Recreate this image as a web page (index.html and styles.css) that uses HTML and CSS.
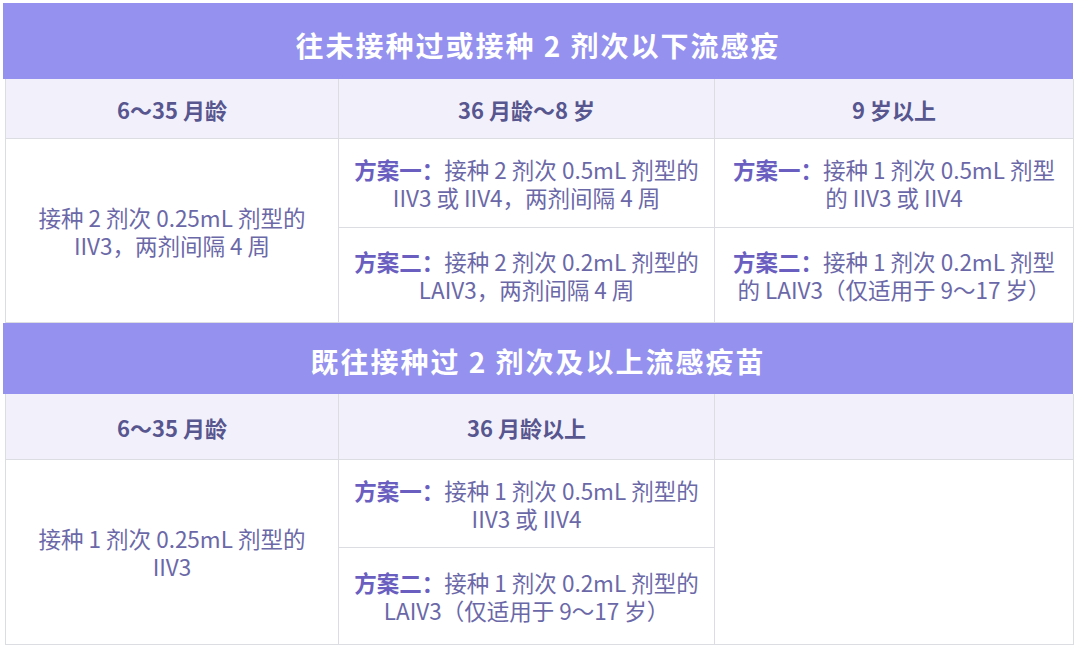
FILE: index.html
```html
<!DOCTYPE html>
<html lang="zh">
<head>
<meta charset="utf-8">
<link rel="stylesheet" href="styles.css">
</head>
<body>
<div class="page">
  <div class="band band1">往未接种过或接种 2 剂次以下流感疫</div>
  <div class="grid g1">
    <div class="th">6～35 月龄</div>
    <div class="th">36 月龄～8 岁</div>
    <div class="th">9 岁以上</div>
    <div class="td span2"><p class="txt">接种 2 剂次 0.25mL 剂型的<br>IIV3，两剂间隔 4 周</p></div>
    <div class="td"><p class="txt"><span class="plan">方案一：</span>接种 2 剂次 0.5mL 剂型的<br>IIV3 或 IIV4，两剂间隔 4 周</p></div>
    <div class="td"><p class="txt"><span class="plan">方案一：</span>接种 1 剂次 0.5mL 剂型<br>的 IIV3 或 IIV4</p></div>
    <div class="td"><p class="txt"><span class="plan">方案二：</span>接种 2 剂次 0.2mL 剂型的<br>LAIV3，两剂间隔 4 周</p></div>
    <div class="td"><p class="txt"><span class="plan">方案二：</span>接种 1 剂次 0.2mL 剂型<br>的 LAIV3（仅适用于 9～17 岁）</p></div>
  </div>
  <div class="band band2">既往接种过 2 剂次及以上流感疫苗</div>
  <div class="grid g2">
    <div class="th">6～35 月龄</div>
    <div class="th">36 月龄以上</div>
    <div class="th"></div>
    <div class="td span2"><p class="txt">接种 1 剂次 0.25mL 剂型的<br>IIV3</p></div>
    <div class="td"><p class="txt"><span class="plan">方案一：</span>接种 1 剂次 0.5mL 剂型的<br>IIV3 或 IIV4</p></div>
    <div class="td span2"></div>
    <div class="td"><p class="txt"><span class="plan">方案二：</span>接种 1 剂次 0.2mL 剂型的<br>LAIV3（仅适用于 9～17 岁）</p></div>
  </div>
</div>
</body>
</html>
```
FILE: styles.css
```css
* { box-sizing: border-box; }
html, body {
  margin: 0;
  padding: 0;
  background: #ffffff;
}
body {
  padding-top: 3px;
  font-family: "Noto Sans CJK SC", "Noto Sans", sans-serif;
}
.page {
  width: 1070px;
  margin-left: 3px;
}
.band {
  background: #9591ee;
  color: #ffffff;
  font-weight: 700;
  font-size: 28px;
  letter-spacing: 2px;
  display: flex;
  align-items: center;
  justify-content: center;
  white-space: nowrap;
}
.band1 { height: 76px; padding-top: 8px; }
.band2 { height: 71px; padding-top: 4px; }
.grid {
  display: grid;
  grid-template-columns: 333px 376px 359px;
  margin-left: 2px;
  border-left: 1px solid #dcdce3;
}
.g1 { grid-template-rows: 60px 89px 95px; }
.g2 { grid-template-rows: 66px 88px 97px; }
.th, .td {
  border-right: 1px solid #dcdce3;
  border-bottom: 1px solid #dcdce3;
  display: flex;
  align-items: center;
  justify-content: center;
  text-align: center;
  white-space: nowrap;
  font-size: 22px;
  line-height: 28px;
}
.th {
  background: #f2f1fb;
  color: #58568f;
  font-weight: 700;
}
.td {
  background: #ffffff;
  color: #6b68a8;
  font-size: 22.5px;
}
.txt {
  margin: 0;
}
.span2 { grid-row: span 2; }
.plan {
  color: #6a5fc0;
  font-weight: 700;
}
```
